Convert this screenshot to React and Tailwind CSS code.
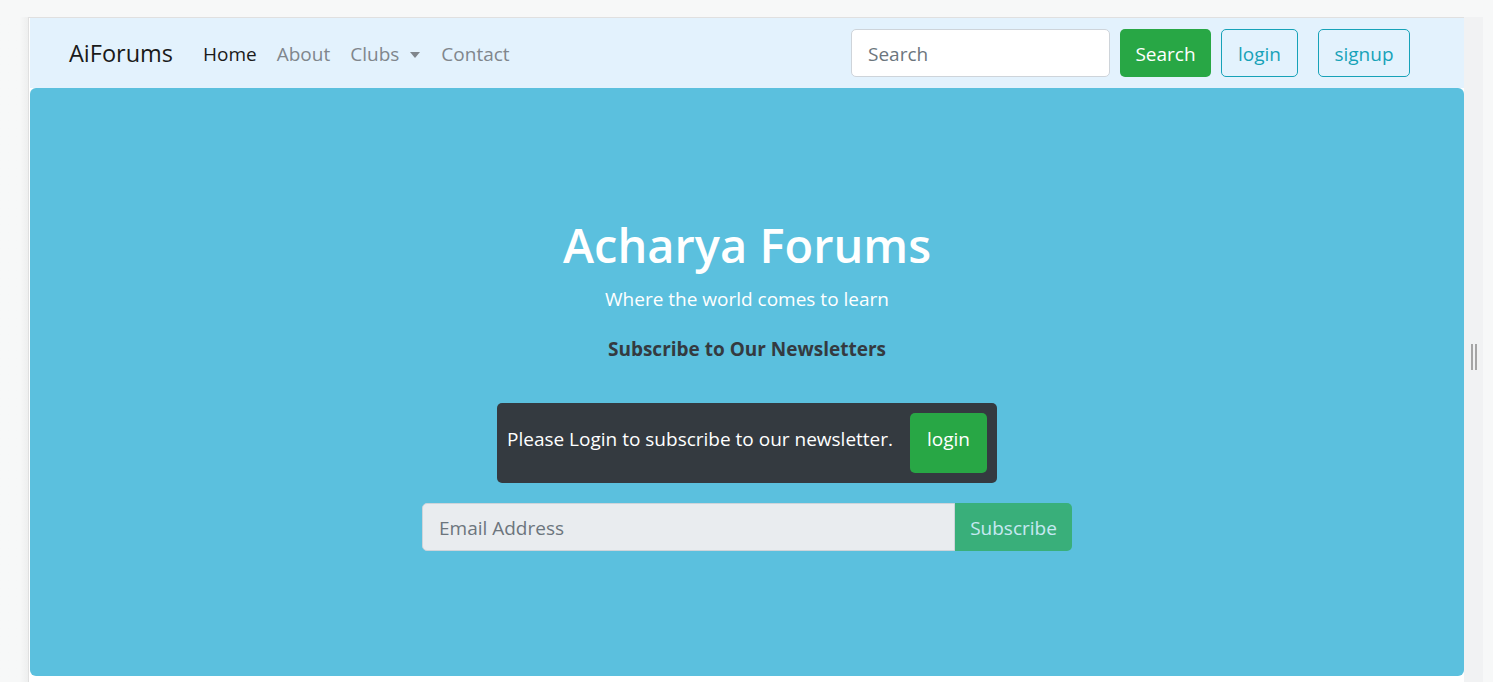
export default function App() {
  return (
    <div className="h-screen w-full overflow-hidden bg-[#f7f8f8] font-['Open_Sans',sans-serif] flex flex-col">
      <div className="h-[17px] shrink-0" />
      <div className="flex flex-1">
        {/* left gutter */}
        <div className="w-[28px] shrink-0 bg-gradient-to-r from-[#f7f8f8] from-70% to-[#eeefef]" />

        {/* page frame */}
        <div className="w-[1436px] shrink-0 border-l border-t border-[#e0e0e0] bg-white pl-px flex flex-col">
          {/* navbar */}
          <nav className="h-[70px] bg-[#e3f2fd] flex items-center pl-[39px] pr-[54px]">
            <span className="text-[23.5px] text-[#1a1a1a] mr-[20px] leading-none mt-[2px]">AiForums</span>
            <ul className="flex items-center text-[19px] mt-[2px]">
              <li className="px-[10px] text-[#1a1a1a]">Home</li>
              <li className="px-[10px] text-[#80868c]">About</li>
              <li className="px-[10px] text-[#80868c] flex items-center">
                Clubs
                <span className="ml-[11px] mt-[1px] w-0 h-0 border-l-[5px] border-r-[5px] border-t-[6px] border-l-transparent border-r-transparent border-t-[#80868c]" />
              </li>
              <li className="pl-[11px] pr-[10px] text-[#80868c]">Contact</li>
            </ul>
            <div className="ml-auto flex items-center">
              <div className="w-[259px] h-[48px] bg-white border border-[#ced4da] rounded-[5px] px-[16px] pt-[2px] flex items-center text-[19px] text-[#6c757d]">
                Search
              </div>
              <button className="ml-[10px] w-[91px] h-[48px] rounded-[5px] bg-[#28a745] text-white text-[19px] pt-[2px]">
                Search
              </button>
              <button className="ml-[10px] w-[77px] h-[48px] rounded-[5px] border border-[#17a2b8] text-[#17a2b8] text-[19px] pt-[2px]">
                login
              </button>
              <button className="ml-[20px] w-[92px] h-[48px] rounded-[5px] border border-[#17a2b8] text-[#17a2b8] text-[19px] pt-[2px]">
                signup
              </button>
            </div>
          </nav>

          {/* jumbotron */}
          <section className="h-[588px] bg-[#5bc0de] rounded-[6px] flex flex-col items-center pt-[127px]">
            <h1 className="text-[47px] leading-[60px] font-semibold text-white">Acharya Forums</h1>
            <p className="mt-[9px] text-[19px] leading-[30px] text-white">Where the world comes to learn</p>
            <h5 className="mt-[20px] text-[19px] leading-[30px] font-bold text-[#343a40]">
              Subscribe to Our Newsletters
            </h5>
            <div className="mt-[39px] w-[500px] h-[80px] bg-[#343a40] rounded-[5px] flex items-center pl-[10px] pr-[10px]">
              <span className="text-[19px] text-white mb-[8px]">Please Login to subscribe to our newsletter.</span>
              <button className="ml-auto w-[77px] h-[60px] rounded-[5px] bg-[#28a745] text-white text-[19px] pb-[8px]">
                login
              </button>
            </div>
            <div className="mt-[20px] flex">
              <div className="w-[533px] h-[48px] bg-[#e9ecef] border border-[#ced4da] rounded-l-[5px] px-[16px] pt-[2px] flex items-center text-[19px] text-[#6c757d]">
                Email Address
              </div>
              <button className="w-[117px] h-[48px] rounded-r-[5px] bg-[#28a745] opacity-65 text-white text-[19px] pt-[2px]">
                Subscribe
              </button>
            </div>
          </section>
        </div>

        {/* right strip with resize handle */}
        <div className="w-[19px] shrink-0 bg-[#f1f2f3] flex items-center justify-center">
          <div className="flex gap-[2px] mt-[15px]">
            <div className="w-[2px] h-[26px] bg-[#a5a5a5]" />
            <div className="w-[2px] h-[26px] bg-[#a5a5a5]" />
          </div>
        </div>
        <div className="flex-1" />
      </div>
    </div>
  );
}
